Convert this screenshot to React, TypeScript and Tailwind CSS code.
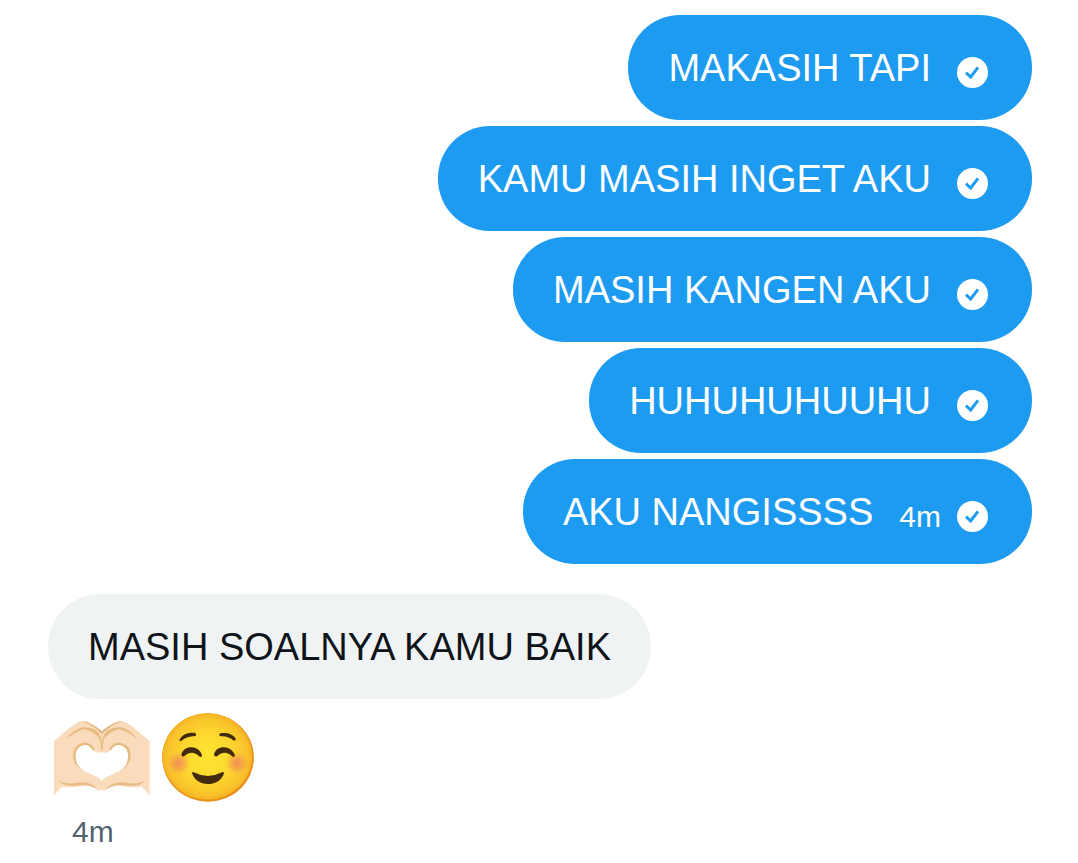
type Message = { text: string; time?: string };

const sent: Message[] = [
  { text: "MAKASIH TAPI" },
  { text: "KAMU MASIH INGET AKU" },
  { text: "MASIH KANGEN AKU" },
  { text: "HUHUHUHUUHU" },
  { text: "AKU NANGISSSS", time: "4m" },
];

function SentIcon() {
  return (
    <svg role="img" aria-label="Sent" viewBox="0 0 93 93" className="size-[31px] shrink-0">
      <circle cx="46.500" cy="46.500" r="46.500" fill="#fff" />
      <path d="M27 47l14 13 22-29" fill="none" stroke="#1d9bf0" strokeWidth="9" />
    </svg>
  );
}

function HalfHeart() {
  return (
    <g>
      <path
        d="M42 123L96 78Q119 62 132 62Q157 66 186 94V157Q166 162 158 146Q146 130 130 136C111 141 103 157 108 183C114 205 139 219 160 226Q181 232 186 246V268Q178 277 169 267Q151 255 125 259Q85 264 66 260L42 286Z"
        fill="#fadcbd"
      />
      <path d="M125 63Q153 68 185 93L186 103Q162 77 125 63Z" fill="#dfb478" />
      <path
        d="M77 119Q102 88 126 82Q150 80 169 92Q187 104 188 148L183 152Q183 127 178 115Q160 94 133 87Q113 91 77 119Z"
        fill="#e7ba80"
      />
      <path
        d="M164 150C157 133 145 125 127 129C105 134 95 155 101 180C107 204 139 216 162 227C129 215 112 202 108 181C103 157 112 140 130 136C146 132 153 144 158 151Z"
        fill="#e7ba80"
      />
      <path
        d="M57 243Q76 253 101 250C139 243 159 251 173 268Q150 253 130 254C99 259 69 259 57 243Z"
        fill="#e7ba80"
      />
    </g>
  );
}

function HeartHands() {
  return (
    <svg role="img" aria-label="Heart hands" viewBox="42 39 288 267" className="h-[89px] w-24">
      <HalfHeart />
      <g transform="translate(371 0) scale(-1 1)">
        <HalfHeart />
      </g>
    </svg>
  );
}

function SmilingFace() {
  return (
    <svg role="img" aria-label="Smiling face" viewBox="36 38 276 268" className="h-[89px] w-[92px]">
      <defs>
        <radialGradient id="skin" cx="0.5" cy="0.5" r="0.52">
          <stop offset="0" stopColor="#fee433" />
          <stop offset="0.5" stopColor="#fdd92f" />
          <stop offset="0.85" stopColor="#f9c32b" />
          <stop offset="1" stopColor="#f4ad24" />
        </radialGradient>
        <radialGradient id="blush">
          <stop offset="0" stopColor="#ef7d60" stopOpacity="0.8" />
          <stop offset="0.5" stopColor="#f08c58" stopOpacity="0.5" />
          <stop offset="1" stopColor="#f6b044" stopOpacity="0" />
        </radialGradient>
      </defs>
      <ellipse cx="174" cy="172" rx="138" ry="133" fill="#e98e16" />
      <ellipse cx="172" cy="169" rx="135" ry="130" fill="url(#skin)" />
      <circle cx="85" cy="189" r="38" fill="url(#blush)" />
      <circle cx="262" cy="189" r="38" fill="url(#blush)" />
      <g fill="#422b0d">
        <path d="M88 119C96 103 113 96 134 98Q140 99 138 105Q136 109 128 108Q110 109 95 121Q89 126 88 119Z" />
        <path d="M258 116C249 102 234 97 212 99Q206 101 208 105Q209 109 217 108Q237 109 250 120Q257 123 258 116Z" />
        <path d="M94 162C98 148 111 140 125 141C141 142 153 152 156 166Q155 173 148 169Q136 157 123 158Q112 158 101 169Q94 171 94 162Z" />
        <path d="M192 162C196 148 209 140 223 141C239 142 251 152 255 166Q254 173 247 169Q235 157 222 158Q211 158 200 169Q193 171 192 162Z" />
        <path d="M126 219Q126 214 133 217Q174 238 214 217Q222 213 222 220C216 239 197 252 174 252C150 252 132 239 126 219Z" />
      </g>
    </svg>
  );
}

export default function App() {
  return (
    <main className="min-h-screen bg-white pt-[15px] pr-[46px] pb-4 pl-12 font-['Liberation_Sans',Arial,sans-serif] text-[38px] leading-[45px]">
      <ul className="flex flex-col items-end gap-1.5">
        {sent.map((message) => (
          <li
            key={message.text}
            className="flex items-center rounded-[52px] bg-[#1d9bf0] pt-[31px] pr-11 pb-[29px] pl-10 text-white"
          >
            <p>{message.text}</p>
            <div className="mt-2 ml-[26px] flex h-[31px] items-center gap-4">
              {message.time && <time className="text-[30px] leading-8">{message.time}</time>}
              <SentIcon />
            </div>
          </li>
        ))}
      </ul>
      <section className="mt-[30px] flex flex-col items-start">
        <p className="rounded-[52px] bg-[#eff3f4] px-10 pt-[31px] pb-[29px] text-[#0f1419]">
          MASIH SOALNYA KAMU BAIK
        </p>
        <div className="mt-3.5 ml-1.5 flex gap-3">
          <HeartHands />
          <SmilingFace />
        </div>
        <time className="mt-3.5 ml-6 text-[30px] leading-8 text-[#536471]">4m</time>
      </section>
    </main>
  );
}
